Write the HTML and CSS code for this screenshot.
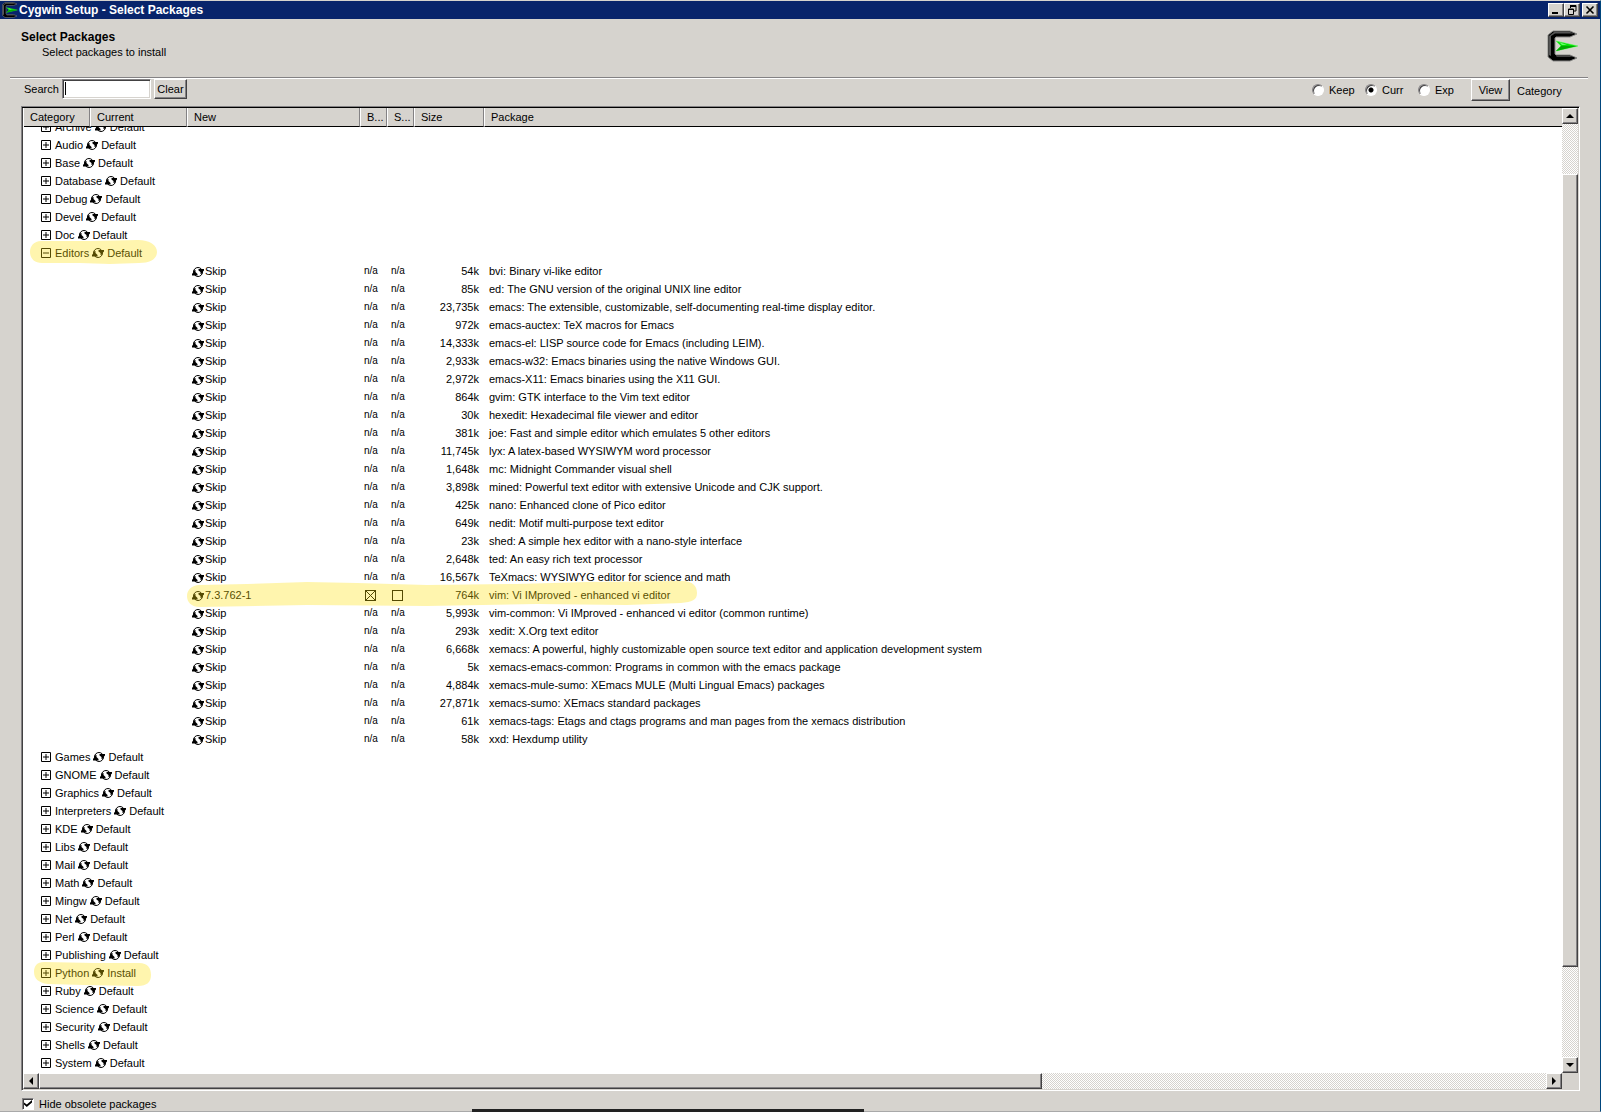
FILE: index.html
```
<!DOCTYPE html>
<html lang="en">
<head>
<meta charset="utf-8">
<title>Cygwin Setup - Select Packages</title>
<link rel="stylesheet" href="styles.css">
</head>
<body>
<svg class="defs" aria-hidden="true">
  <symbol id="sync" viewBox="0 0 12 12">
    <circle cx="6" cy="6" r="4.500" fill="none" stroke="#000"/>
    <path d="M0 9.500V8L1.500 6V4.500L3.500 4V6L5.500 8V9.500ZM6.500 3H12V4.500L10.500 6V7.500L8.500 8V6L6.500 4.500Z"/>
  </symbol>
  <symbol id="plus" viewBox="0 0 10 10"><path d="M.5.5H9.500V9.500H.5ZM2 5H8M5 2V8" fill="none" stroke="#000"/></symbol>
  <symbol id="minus" viewBox="0 0 10 10"><path d="M.5.5H9.500V9.500H.5ZM2 5H8" fill="none" stroke="#000"/></symbol>
  <symbol id="logo" viewBox="0 0 32 32">
    <path d="M6 1H23L30 4L23 7H9L8 8V24L9 25H23L30 28L23 31H6L1 27V5Z" fill="#000" stroke="#8a8a88" stroke-width="1"/>
    <path d="M7 2H23L27 3.500H8L4 6V26L2 25V6Z" fill="#555"/>
    <path d="M9 26H23L27 27H10Z" fill="#444"/>
    <path d="M9 11L31 16L9 21L14 16Z" fill="#0d0" stroke="#5f5" stroke-width=".5"/>
    <path d="M14 16H30L9 21Z" fill="#0a0"/>
    <path d="M12 12L20 15H15Z" fill="#6f6"/>
  </symbol>
</svg>
<main class="window">
  <header class="titlebar">
    <svg class="title-icon"><use href="#logo"/></svg>
    <span class="title">Cygwin Setup - Select Packages</span>
    <button class="bevel win-btn" aria-label="Minimize"><svg viewBox="0 0 10 10"><path d="M1 7H7V9H1Z"/></svg></button>
    <button class="bevel win-btn" aria-label="Restore"><svg viewBox="0 0 10 10"><path d="M3 .5H9V6H7M3 1.500H9M3.500 1V3M1.500 4H6.500V9.500H1.500ZM1 4.500H7" fill="none" stroke="#000"/></svg></button>
    <button class="bevel win-btn close" aria-label="Close"><svg viewBox="0 0 10 10"><path d="M1.500 1.500L8.500 8.500M8.500 1.500L1.500 8.500" fill="none" stroke="#000" stroke-width="1.600"/></svg></button>
  </header>
  <section class="banner">
    <div>
      <h1>Select Packages</h1>
      <p>Select packages to install</p>
    </div>
    <svg class="banner-logo"><use href="#logo"/></svg>
  </section>
  <form class="toolbar">
    <label for="search">Search</label>
    <input id="search" class="search" type="text">
    <button type="button" class="bevel clear">Clear</button>
    <div class="trust">
      <label><input type="radio" name="trust">Keep</label>
      <label><input type="radio" name="trust" checked>Curr</label>
      <label><input type="radio" name="trust">Exp</label>
    </div>
    <button type="button" class="bevel view">View</button>
    <span class="view-name">Category</span>
  </form>
  <section class="list">
    <div class="viewport">
      <table>
        <colgroup><col class="c-cat"><col class="c-cur"><col class="c-new"><col class="c-bin"><col class="c-src"><col class="c-size"><col></colgroup>
        <thead><tr><th>Category</th><th>Current</th><th>New</th><th>B...</th><th>S...</th><th>Size</th><th>Package</th></tr></thead>
        <tbody>
          <tr class="clipped"><td colspan="7"><div class="cat"><button aria-label="Expand"><svg><use href="#plus"/></svg></button>Archive<svg><use href="#sync"/></svg>Default</div></td></tr>
          <tr><td colspan="7"><div class="cat"><button aria-label="Expand"><svg><use href="#plus"/></svg></button>Audio<svg><use href="#sync"/></svg>Default</div></td></tr>
          <tr><td colspan="7"><div class="cat"><button aria-label="Expand"><svg><use href="#plus"/></svg></button>Base<svg><use href="#sync"/></svg>Default</div></td></tr>
          <tr><td colspan="7"><div class="cat"><button aria-label="Expand"><svg><use href="#plus"/></svg></button>Database<svg><use href="#sync"/></svg>Default</div></td></tr>
          <tr><td colspan="7"><div class="cat"><button aria-label="Expand"><svg><use href="#plus"/></svg></button>Debug<svg><use href="#sync"/></svg>Default</div></td></tr>
          <tr><td colspan="7"><div class="cat"><button aria-label="Expand"><svg><use href="#plus"/></svg></button>Devel<svg><use href="#sync"/></svg>Default</div></td></tr>
          <tr><td colspan="7"><div class="cat"><button aria-label="Expand"><svg><use href="#plus"/></svg></button>Doc<svg><use href="#sync"/></svg>Default</div></td></tr>
          <tr><td colspan="7"><div class="cat"><button aria-label="Collapse"><svg><use href="#minus"/></svg></button>Editors<svg><use href="#sync"/></svg>Default<svg class="mark mark-editors" viewBox="0 0 127 24"><path d="M11 1H62L108 0C120 0 127 5 127 12S120 23 109 23L80 24L50 23H12C4 23 0 18 0 12S4 1 11 1Z"/></svg></div></td></tr>
          <tr><td></td><td></td><td><svg><use href="#sync"/></svg>Skip</td><td>n/a</td><td>n/a</td><td>54k</td><td>bvi: Binary vi-like editor</td></tr>
          <tr><td></td><td></td><td><svg><use href="#sync"/></svg>Skip</td><td>n/a</td><td>n/a</td><td>85k</td><td>ed: The GNU version of the original UNIX line editor</td></tr>
          <tr><td></td><td></td><td><svg><use href="#sync"/></svg>Skip</td><td>n/a</td><td>n/a</td><td>23,735k</td><td>emacs: The extensible, customizable, self-documenting real-time display editor.</td></tr>
          <tr><td></td><td></td><td><svg><use href="#sync"/></svg>Skip</td><td>n/a</td><td>n/a</td><td>972k</td><td>emacs-auctex: TeX macros for Emacs</td></tr>
          <tr><td></td><td></td><td><svg><use href="#sync"/></svg>Skip</td><td>n/a</td><td>n/a</td><td>14,333k</td><td>emacs-el: LISP source code for Emacs (including LEIM).</td></tr>
          <tr><td></td><td></td><td><svg><use href="#sync"/></svg>Skip</td><td>n/a</td><td>n/a</td><td>2,933k</td><td>emacs-w32: Emacs binaries using the native Windows GUI.</td></tr>
          <tr><td></td><td></td><td><svg><use href="#sync"/></svg>Skip</td><td>n/a</td><td>n/a</td><td>2,972k</td><td>emacs-X11: Emacs binaries using the X11 GUI.</td></tr>
          <tr><td></td><td></td><td><svg><use href="#sync"/></svg>Skip</td><td>n/a</td><td>n/a</td><td>864k</td><td>gvim: GTK interface to the Vim text editor</td></tr>
          <tr><td></td><td></td><td><svg><use href="#sync"/></svg>Skip</td><td>n/a</td><td>n/a</td><td>30k</td><td>hexedit: Hexadecimal file viewer and editor</td></tr>
          <tr><td></td><td></td><td><svg><use href="#sync"/></svg>Skip</td><td>n/a</td><td>n/a</td><td>381k</td><td>joe: Fast and simple editor which emulates 5 other editors</td></tr>
          <tr><td></td><td></td><td><svg><use href="#sync"/></svg>Skip</td><td>n/a</td><td>n/a</td><td>11,745k</td><td>lyx: A latex-based WYSIWYM word processor</td></tr>
          <tr><td></td><td></td><td><svg><use href="#sync"/></svg>Skip</td><td>n/a</td><td>n/a</td><td>1,648k</td><td>mc: Midnight Commander visual shell</td></tr>
          <tr><td></td><td></td><td><svg><use href="#sync"/></svg>Skip</td><td>n/a</td><td>n/a</td><td>3,898k</td><td>mined: Powerful text editor with extensive Unicode and CJK support.</td></tr>
          <tr><td></td><td></td><td><svg><use href="#sync"/></svg>Skip</td><td>n/a</td><td>n/a</td><td>425k</td><td>nano: Enhanced clone of Pico editor</td></tr>
          <tr><td></td><td></td><td><svg><use href="#sync"/></svg>Skip</td><td>n/a</td><td>n/a</td><td>649k</td><td>nedit: Motif multi-purpose text editor</td></tr>
          <tr><td></td><td></td><td><svg><use href="#sync"/></svg>Skip</td><td>n/a</td><td>n/a</td><td>23k</td><td>shed: A simple hex editor with a nano-style interface</td></tr>
          <tr><td></td><td></td><td><svg><use href="#sync"/></svg>Skip</td><td>n/a</td><td>n/a</td><td>2,648k</td><td>ted: An easy rich text processor</td></tr>
          <tr><td></td><td></td><td><svg><use href="#sync"/></svg>Skip</td><td>n/a</td><td>n/a</td><td>16,567k</td><td>TeXmacs: WYSIWYG editor for science and math</td></tr>
          <tr><td></td><td></td><td class="marked"><svg><use href="#sync"/></svg>7.3.762-1<svg class="mark mark-vim" viewBox="0 0 510 26"><path d="M12 4L60 3L120 1L170 2L240 4L330 3L400 1L495 0C506 0 510 5 510 12S505 21 494 22L440 24L350 23L240 25L120 24L13 26C4 26 0 21 0 15S5 4 12 4Z"/></svg></td><td><input type="checkbox" aria-label="Install vim binary" checked></td><td><input type="checkbox" aria-label="Install vim source"></td><td>764k</td><td>vim: Vi IMproved - enhanced vi editor</td></tr>
          <tr><td></td><td></td><td><svg><use href="#sync"/></svg>Skip</td><td>n/a</td><td>n/a</td><td>5,993k</td><td>vim-common: Vi IMproved - enhanced vi editor (common runtime)</td></tr>
          <tr><td></td><td></td><td><svg><use href="#sync"/></svg>Skip</td><td>n/a</td><td>n/a</td><td>293k</td><td>xedit: X.Org text editor</td></tr>
          <tr><td></td><td></td><td><svg><use href="#sync"/></svg>Skip</td><td>n/a</td><td>n/a</td><td>6,668k</td><td>xemacs: A powerful, highly customizable open source text editor and application development system</td></tr>
          <tr><td></td><td></td><td><svg><use href="#sync"/></svg>Skip</td><td>n/a</td><td>n/a</td><td>5k</td><td>xemacs-emacs-common: Programs in common with the emacs package</td></tr>
          <tr><td></td><td></td><td><svg><use href="#sync"/></svg>Skip</td><td>n/a</td><td>n/a</td><td>4,884k</td><td>xemacs-mule-sumo: XEmacs MULE (Multi Lingual Emacs) packages</td></tr>
          <tr><td></td><td></td><td><svg><use href="#sync"/></svg>Skip</td><td>n/a</td><td>n/a</td><td>27,871k</td><td>xemacs-sumo: XEmacs standard packages</td></tr>
          <tr><td></td><td></td><td><svg><use href="#sync"/></svg>Skip</td><td>n/a</td><td>n/a</td><td>61k</td><td>xemacs-tags: Etags and ctags programs and man pages from the xemacs distribution</td></tr>
          <tr><td></td><td></td><td><svg><use href="#sync"/></svg>Skip</td><td>n/a</td><td>n/a</td><td>58k</td><td>xxd: Hexdump utility</td></tr>
          <tr><td colspan="7"><div class="cat"><button aria-label="Expand"><svg><use href="#plus"/></svg></button>Games<svg><use href="#sync"/></svg>Default</div></td></tr>
          <tr><td colspan="7"><div class="cat"><button aria-label="Expand"><svg><use href="#plus"/></svg></button>GNOME<svg><use href="#sync"/></svg>Default</div></td></tr>
          <tr><td colspan="7"><div class="cat"><button aria-label="Expand"><svg><use href="#plus"/></svg></button>Graphics<svg><use href="#sync"/></svg>Default</div></td></tr>
          <tr><td colspan="7"><div class="cat"><button aria-label="Expand"><svg><use href="#plus"/></svg></button>Interpreters<svg><use href="#sync"/></svg>Default</div></td></tr>
          <tr><td colspan="7"><div class="cat"><button aria-label="Expand"><svg><use href="#plus"/></svg></button>KDE<svg><use href="#sync"/></svg>Default</div></td></tr>
          <tr><td colspan="7"><div class="cat"><button aria-label="Expand"><svg><use href="#plus"/></svg></button>Libs<svg><use href="#sync"/></svg>Default</div></td></tr>
          <tr><td colspan="7"><div class="cat"><button aria-label="Expand"><svg><use href="#plus"/></svg></button>Mail<svg><use href="#sync"/></svg>Default</div></td></tr>
          <tr><td colspan="7"><div class="cat"><button aria-label="Expand"><svg><use href="#plus"/></svg></button>Math<svg><use href="#sync"/></svg>Default</div></td></tr>
          <tr><td colspan="7"><div class="cat"><button aria-label="Expand"><svg><use href="#plus"/></svg></button>Mingw<svg><use href="#sync"/></svg>Default</div></td></tr>
          <tr><td colspan="7"><div class="cat"><button aria-label="Expand"><svg><use href="#plus"/></svg></button>Net<svg><use href="#sync"/></svg>Default</div></td></tr>
          <tr><td colspan="7"><div class="cat"><button aria-label="Expand"><svg><use href="#plus"/></svg></button>Perl<svg><use href="#sync"/></svg>Default</div></td></tr>
          <tr><td colspan="7"><div class="cat"><button aria-label="Expand"><svg><use href="#plus"/></svg></button>Publishing<svg><use href="#sync"/></svg>Default</div></td></tr>
          <tr><td colspan="7"><div class="cat"><button aria-label="Expand"><svg><use href="#plus"/></svg></button>Python<svg><use href="#sync"/></svg>Install<svg class="mark mark-python" viewBox="0 0 117 24"><path d="M10 0L60 1H105C114 1 117 6 117 13S113 24 104 24L50 23L14 22C4 21 0 16 0 10S3 0 10 0Z"/></svg></div></td></tr>
          <tr><td colspan="7"><div class="cat"><button aria-label="Expand"><svg><use href="#plus"/></svg></button>Ruby<svg><use href="#sync"/></svg>Default</div></td></tr>
          <tr><td colspan="7"><div class="cat"><button aria-label="Expand"><svg><use href="#plus"/></svg></button>Science<svg><use href="#sync"/></svg>Default</div></td></tr>
          <tr><td colspan="7"><div class="cat"><button aria-label="Expand"><svg><use href="#plus"/></svg></button>Security<svg><use href="#sync"/></svg>Default</div></td></tr>
          <tr><td colspan="7"><div class="cat"><button aria-label="Expand"><svg><use href="#plus"/></svg></button>Shells<svg><use href="#sync"/></svg>Default</div></td></tr>
          <tr><td colspan="7"><div class="cat"><button aria-label="Expand"><svg><use href="#plus"/></svg></button>System<svg><use href="#sync"/></svg>Default</div></td></tr>
        </tbody>
      </table>
    </div>
    <div class="scroll vertical">
      <button class="bevel" aria-label="Scroll up"><svg viewBox="0 0 8 8"><path d="M4 2L8 6H0Z"/></svg></button>
      <span class="before"></span><span class="bevel thumb"></span><span class="after"></span>
      <button class="bevel" aria-label="Scroll down"><svg viewBox="0 0 8 8"><path d="M0 2H8L4 6Z"/></svg></button>
    </div>
    <div class="scroll horizontal">
      <button class="bevel" aria-label="Scroll left"><svg viewBox="0 0 8 8"><path d="M6 0V8L2 4Z"/></svg></button>
      <span class="bevel thumb"></span><span class="after"></span>
      <button class="bevel" aria-label="Scroll right"><svg viewBox="0 0 8 8"><path d="M2 0L6 4L2 8Z"/></svg></button>
    </div>
    <div class="corner"></div>
  </section>
  <footer><label><input type="checkbox" checked>Hide obsolete packages</label></footer>
</main>
<div class="bottom-bar"></div>
</body>
</html>
```
FILE: styles.css
```
* { box-sizing: border-box; }
:root {
  --face: #d6d3ce;
  --shade: #848284;
  --dark: #424142;
  --dither: repeating-conic-gradient(#fff 0 25%, #d6d3ce 0 50%) 0 0 / 2px 2px;
}
body { margin: 0; background: #fff; color: #000; font: 11px/14px "Liberation Sans", Arial, sans-serif; position: relative; }
button, input { font: inherit; color: inherit; margin: 0; padding: 0; }
h1, p { margin: 0; font-size: 11px; }
.defs { position: absolute; width: 0; height: 0; }
.window {
  min-height: calc(100vh - 1px);
  margin-right: 19px;
  display: flex;
  flex-direction: column;
  background: var(--face);
  border-top: 1px solid #d6d3ce;
  border-right: 1px solid #00457c;
  border-bottom: 1px solid #a9a9a9;
}
.bevel {
  background: var(--face);
  border: 1px solid;
  border-color: #fff var(--dark) var(--dark) #fff;
  box-shadow: inset -1px -1px var(--shade);
}

.titlebar { height: 18px; display: flex; align-items: center; padding: 0 2px; background: #08246b; color: #fff; }
.title-icon { width: 16px; height: 16px; }
.title { flex: 1; padding-left: 1px; font-weight: bold; font-size: 12px; }
.win-btn { width: 16px; height: 14px; display: flex; align-items: center; justify-content: center; }
.win-btn svg { width: 10px; height: 10px; }
.close { margin-left: 2px; }

.banner {
  height: 60px;
  margin: 0 12px 0 10px;
  padding: 11px 9px 0 11px;
  display: flex;
  justify-content: space-between;
  border-bottom: 1px solid #fff;
  box-shadow: inset 0 -1px var(--shade);
}
.banner h1 { font-size: 12px; line-height: 14px; }
.banner p { padding: 1px 0 0 21px; }
.banner-logo { width: 32px; height: 32px; }

.toolbar { height: 27px; display: flex; align-items: flex-start; padding: 0 0 0 24px; line-height: 20px; }
.toolbar > label { width: 36px; }
/* The first gradient is the text caret. */
.search {
  width: 89px; height: 20px; margin: 0 3px 0 2px; padding: 0 2px;
  background: linear-gradient(#000, #000) 2px 2px / 1px 13px no-repeat, #fff;
  outline: 0; border: 1px solid; border-color: var(--shade) #fff #fff var(--shade);
  box-shadow: inset 1px 1px var(--dark), inset -1px -1px var(--face);
}
.clear { width: 33px; height: 20px; line-height: 14px; }
.trust { margin-left: auto; display: flex; }
.trust label { width: 53px; display: flex; align-items: center; gap: 5px; height: 22px; }
.trust input {
  appearance: none; width: 12px; height: 12px; border-radius: 50%; background: #fff;
  border: 1px solid; border-color: var(--shade) #fff #fff var(--shade);
  box-shadow: inset 1px 1px var(--dark);
}
.trust input:checked { background: radial-gradient(circle, #000 2px, #fff 3px); }
.view { width: 39px; height: 22px; }
.view-name { width: 90px; padding-left: 7px; line-height: 24px; }

.list {
  flex: 1;
  margin: 0 20px 0 21px;
  display: grid;
  grid-template: 1fr 16px / minmax(0, 1fr) 16px;
  border: 1px solid;
  border-color: var(--shade) #fff #fff var(--shade);
  padding: 1px;
  background: linear-gradient(#000, #000) 0 0 / 100% 1px no-repeat, linear-gradient(var(--dark), var(--dark)) 0 0 / 1px 100% no-repeat, var(--face);
}
.viewport { background: #fff; overflow: hidden; border-left: 1px solid #fff; }
table { width: 100%; table-layout: fixed; border-spacing: 0; }
.c-cat { width: 66px; } .c-cur { width: 97px; } .c-new { width: 173px; }
.c-bin, .c-src { width: 27px; } .c-size { width: 70px; }
th {
  height: 19px; padding: 0 0 0 6px; text-align: left; font-weight: normal; white-space: nowrap;
  background: var(--face); border-bottom: 1px solid #000;
  border-left: 1px solid #fff; border-right: 1px solid var(--shade);
}
th:first-child { border-left: 0; }
th:last-child { border-right: 0; }
td { height: 18px; padding: 0; white-space: nowrap; line-height: 18px; }
td svg { width: 12px; height: 12px; vertical-align: -3px; }
td:nth-child(3) { padding-left: 5px; }
td:nth-child(3) svg { margin-right: 1px; }
td:nth-child(4), td:nth-child(5) { padding-left: 4px; font-size: 10px; }
td:nth-child(6) { text-align: right; padding-right: 5px; }
td:nth-child(7) { padding-left: 5px; }
.cat { position: relative; display: flex; align-items: center; height: 18px; padding-left: 17px; }
.cat button { width: 10px; height: 10px; margin-right: 4px; border: 0; background: none; display: flex; }
.cat button svg { width: 10px; height: 10px; margin: 0; }
.cat svg { margin: 0 3px; }
/* Row scrolled halfway under the column headings. */
.clipped td { height: 9px; }
.clipped .cat { height: 9px; overflow: hidden; align-items: center; padding-bottom: 9px; }
.clipped .cat { box-sizing: content-box; height: 0; }
td input {
  appearance: none; display: block; width: 11px; height: 11px; margin-left: 1px; border: 1px solid #000; background: none;
}
td input:checked {
  background: linear-gradient(45deg, transparent 46%, #000 46% 54%, transparent 54%), linear-gradient(-45deg, transparent 46%, #000 46% 54%, transparent 54%);
}
.marked { position: relative; }
td .mark { position: absolute; margin: 0; fill: rgba(255, 225, 10, .33); pointer-events: none; }
td .mark-editors { left: 6px; top: -4px; width: 127px; height: 24px; }
td .mark-python { left: 10px; top: -2px; width: 117px; height: 24px; }
td .mark-vim { left: 0; top: -5px; width: 510px; height: 26px; }

.scroll { display: flex; background: var(--dither); }
.scroll button { width: 16px; height: 16px; flex: none; display: flex; align-items: center; justify-content: center; }
.scroll svg { width: 8px; height: 8px; }
.vertical { flex-direction: column; }
.vertical .before { flex: 50; }
.vertical .thumb { flex: 794; }
.vertical .after { flex: 90; }
.horizontal .thumb { flex: 1002; }
.horizontal .after { flex: 505; }
.corner { background: var(--face); }

footer { height: 20px; padding: 6px 0 0 22px; }
footer label { display: flex; align-items: center; gap: 5px; height: 13px; width: max-content; }
footer input {
  appearance: none; width: 12px; height: 12px; border: 1px solid; border-color: var(--shade) #fff #fff var(--shade);
  background: #fff; box-shadow: inset 1px 1px var(--dark); display: grid; place-items: center;
}
footer input::after { content: ""; width: 8px; height: 7px; background: #000; clip-path: polygon(0 35%, 35% 65%, 100% 0, 100% 35%, 35% 100%, 0 65%); }
.bottom-bar { position: absolute; bottom: 0; left: 472px; width: 392px; height: 3px; background: #222; }
```
